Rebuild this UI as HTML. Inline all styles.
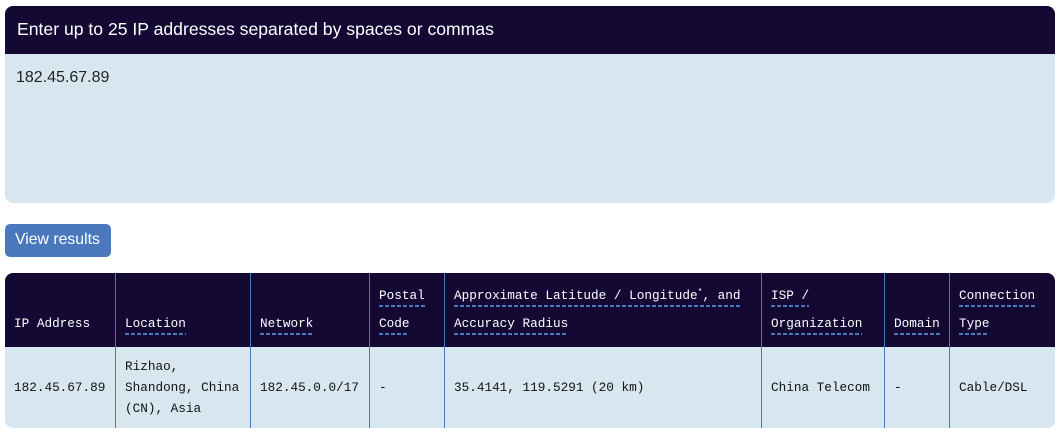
<!DOCTYPE html>
<html><head><meta charset="utf-8"><style>
*{margin:0;padding:0;box-sizing:border-box}
body{width:1061px;height:434px;background:#fff;position:relative;font-family:"Liberation Sans",sans-serif;overflow:hidden}
.box{position:absolute;left:5px;top:6px;width:1050px;height:197px;background:#d8e6f0;border-radius:8px;overflow:hidden}
.box .h{height:48px;background:#130932;color:#fff;font-size:17.6px;padding:13px 0 0 12px}
.box .v{font-size:16px;color:#222;padding:15px 0 0 11px}
.btn{position:absolute;left:5px;top:224px;width:106px;height:33px;background:#4a78bd;border-radius:5px;color:#fff;font-size:15.8px;padding:7px 0 0 10px}
.tb{position:absolute;left:5px;top:273px;width:1050px;height:155px;background:#d8e6f0;border-radius:8px;overflow:hidden;font-family:"Liberation Mono",monospace;font-size:12.7px}
.hd{position:absolute;left:0;top:0;width:1050px;height:74px;background:#130932}
.vl{position:absolute;top:0;width:1px;height:155px;background:#4a78bd}
.t{position:absolute;white-space:nowrap}
.w{color:#fff}
.u{padding-bottom:4px;background:linear-gradient(90deg,#4a78bd 65%,transparent 65%) repeat-x left bottom/6px 2px}
.d{color:#111;line-height:21px}
</style></head><body>
<div class="box"><div class="h">Enter up to 25 IP addresses separated by spaces or commas</div><div class="v">182.45.67.89</div></div>
<div class="btn">View results</div>
<div class="tb">
<div class="hd"></div>
<div class="vl" style="left:110px"></div><div class="vl" style="left:245px"></div><div class="vl" style="left:364px"></div><div class="vl" style="left:439px"></div><div class="vl" style="left:756px"></div><div class="vl" style="left:879px"></div><div class="vl" style="left:944px"></div>
<div class="t w" style="left:9px;top:43px">IP Address</div>
<div class="t w" style="left:120px;top:43px"><span class="u">Location</span></div>
<div class="t w" style="left:255px;top:43px"><span class="u">Network</span></div>
<div class="t w" style="left:374px;top:15px"><span class="u">Postal</span></div>
<div class="t w" style="left:374px;top:43px"><span class="u">Code</span></div>
<div class="t w" style="left:449px;top:15px"><span class="u">Approximate Latitude / Longitude<sup style="font-size:8px">*</sup>, and</span></div>
<div class="t w" style="left:449px;top:43px"><span class="u">Accuracy Radius</span></div>
<div class="t w" style="left:766px;top:15px"><span class="u">ISP /</span></div>
<div class="t w" style="left:766px;top:43px"><span class="u">Organization</span></div>
<div class="t w" style="left:889px;top:43px"><span class="u">Domain</span></div>
<div class="t w" style="left:954px;top:15px"><span class="u">Connection</span></div>
<div class="t w" style="left:954px;top:43px"><span class="u">Type</span></div>
<div class="t d" style="left:9px;top:104px">182.45.67.89</div>
<div class="t d" style="left:120px;top:83px">Rizhao,<br>Shandong, China<br>(CN), Asia</div>
<div class="t d" style="left:255px;top:104px">182.45.0.0/17</div>
<div class="t d" style="left:374px;top:104px">-</div>
<div class="t d" style="left:449px;top:104px">35.4141, 119.5291 (20 km)</div>
<div class="t d" style="left:766px;top:104px">China Telecom</div>
<div class="t d" style="left:889px;top:104px">-</div>
<div class="t d" style="left:954px;top:104px">Cable/DSL</div>
</div>
</body></html>
